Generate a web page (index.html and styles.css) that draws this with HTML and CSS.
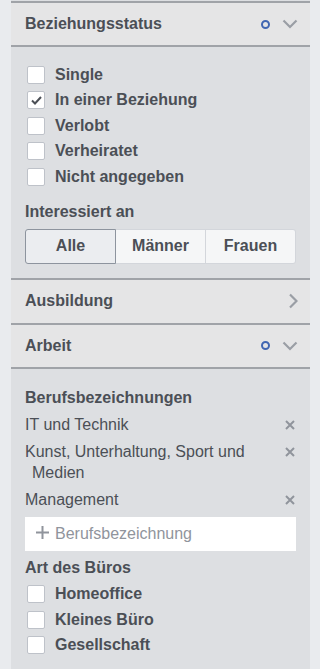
FILE: index.html
```html
<!DOCTYPE html>
<html lang="de">
<head>
  <meta charset="UTF-8">
  <meta name="viewport" content="width=device-width, initial-scale=1.0">
  <title>Filter</title>
  <link rel="stylesheet" href="styles.css">
</head>
<body>
  <div class="panel">

    <div class="head">
      <span class="title">Beziehungsstatus</span>
      <span class="icons">
        <span class="dot"></span>
        <svg class="chev" width="16" height="10" viewBox="0 0 16 10"><path d="M1.5 1.5 L8 8 L14.5 1.5" fill="none" stroke="#9a9ea5" stroke-width="2.2"/></svg>
      </span>
    </div>
    <div class="body body-status">
      <ul class="checks">
        <li><span class="box"></span>Single</li>
        <li><span class="box"><svg width="13" height="11" viewBox="0 0 13 11"><path d="M2 5.5 L5 8.5 L11 2" fill="none" stroke="#4b4f56" stroke-width="2"/></svg></span>In einer Beziehung</li>
        <li><span class="box"></span>Verlobt</li>
        <li><span class="box"></span>Verheiratet</li>
        <li><span class="box"></span>Nicht angegeben</li>
      </ul>
      <div class="label label-interest">Interessiert an</div>
      <div class="seg">
        <button class="on">Alle</button>
        <button>Männer</button>
        <button>Frauen</button>
      </div>
    </div>

    <div class="head head-tall">
      <span class="title">Ausbildung</span>
      <span class="icons">
        <svg class="chev" width="10" height="16" viewBox="0 0 10 16"><path d="M2 1.5 L8.5 8 L2 14.5" fill="none" stroke="#9a9ea5" stroke-width="2.2"/></svg>
      </span>
    </div>

    <div class="head">
      <span class="title">Arbeit</span>
      <span class="icons">
        <span class="dot"></span>
        <svg class="chev" width="16" height="10" viewBox="0 0 16 10"><path d="M1.5 1.5 L8 8 L14.5 1.5" fill="none" stroke="#9a9ea5" stroke-width="2.2"/></svg>
      </span>
    </div>
    <div class="body body-work">
      <div class="label">Berufsbezeichnungen</div>
      <ul class="tags">
        <li><span class="tag-text">IT und Technik</span><svg class="x" width="10" height="10" viewBox="0 0 10 10"><path d="M1 1 L9 9 M9 1 L1 9" stroke="#90949c" stroke-width="2"/></svg></li>
        <li><span class="tag-text">Kunst, Unterhaltung, Sport und Medien</span><svg class="x" width="10" height="10" viewBox="0 0 10 10"><path d="M1 1 L9 9 M9 1 L1 9" stroke="#90949c" stroke-width="2"/></svg></li>
        <li><span class="tag-text">Management</span><svg class="x" width="10" height="10" viewBox="0 0 10 10"><path d="M1 1 L9 9 M9 1 L1 9" stroke="#90949c" stroke-width="2"/></svg></li>
      </ul>
      <div class="add"><svg class="plus" width="13" height="13" viewBox="0 0 13 13"><path d="M6.5 0 V13 M0 6.5 H13" stroke="#90949c" stroke-width="2"/></svg>Berufsbezeichnung</div>
      <div class="label label-office">Art des Büros</div>
      <ul class="checks checks-office">
        <li><span class="box"></span>Homeoffice</li>
        <li><span class="box"></span>Kleines Büro</li>
        <li><span class="box"></span>Gesellschaft</li>
      </ul>
    </div>

  </div>
</body>
</html>
```

FILE: styles.css
```css
body { margin: 0; background: #e9ebee; font-family: "Liberation Sans", Arial, sans-serif; color: #4b4f56; font-size: 16px; }
.panel { margin: 0 10px 0 11px; padding-top: 1px; background: #dddfe2; min-height: 668px; }
ul { list-style: none; margin: 0; padding: 0; }

.head { display: flex; align-items: center; justify-content: space-between; height: 42px; padding: 0 12px 0 14px; background: #e5e5e6; border-top: 2px solid #a0a3a8; }
.head-tall { height: 43px; }
.title { font-weight: bold; font-size: 16px; }
.icons { display: flex; align-items: center; gap: 12px; }
.dot { width: 5px; height: 5px; border: 2px solid #4267b2; border-radius: 50%; }
.chev { display: block; }

.body { border-top: 2px solid #a0a3a8; padding: 0 14px; }
.body-status { padding-top: 15px; padding-bottom: 14px; }
.body-work { padding-top: 18px; padding-bottom: 20px; }

.checks li { display: flex; align-items: center; height: 25.5px; padding-left: 2px; font-weight: bold; }
.checks-office { margin-top: 3px; }
.box { width: 16px; height: 16px; margin-right: 10px; background: #fff; border: 1px solid #bec2c9; border-radius: 2px; display: flex; align-items: center; justify-content: center; }

.label { font-weight: bold; line-height: 20px; }
.label-interest { margin-top: 12px; }
.label-office { margin-top: 6px; }

.seg { display: flex; margin-top: 7px; height: 35px; }
.seg button { flex: 1; font: bold 16px "Liberation Sans", Arial, sans-serif; color: #4b4f56; background: #f5f6f7; border: 1px solid #d3d6db; border-left: none; padding: 0; }
.seg button:first-child { border-left: 1px solid #8d949e; border-radius: 3px 0 0 3px; }
.seg button:last-child { border-radius: 0 3px 3px 0; }
.seg button.on { background: #ebedf0; border-color: #8d949e; }

.body-work .label { line-height: 22px; }
.tags { margin-top: 5px; }
.tags li { display: flex; justify-content: space-between; align-items: flex-start; line-height: 21px; margin-bottom: 6px; }
.tag-text { flex: 1; padding-left: 7px; text-indent: -7px; padding-right: 30px; }
.x { margin-top: 6px; margin-right: 1px; flex-shrink: 0; }

.add { margin-top: 7px; height: 34px; background: #fff; display: flex; align-items: center; padding-left: 11px; color: #90949c; font-size: 16px; }
.plus { margin-right: 6px; margin-top: -2px; }
```
